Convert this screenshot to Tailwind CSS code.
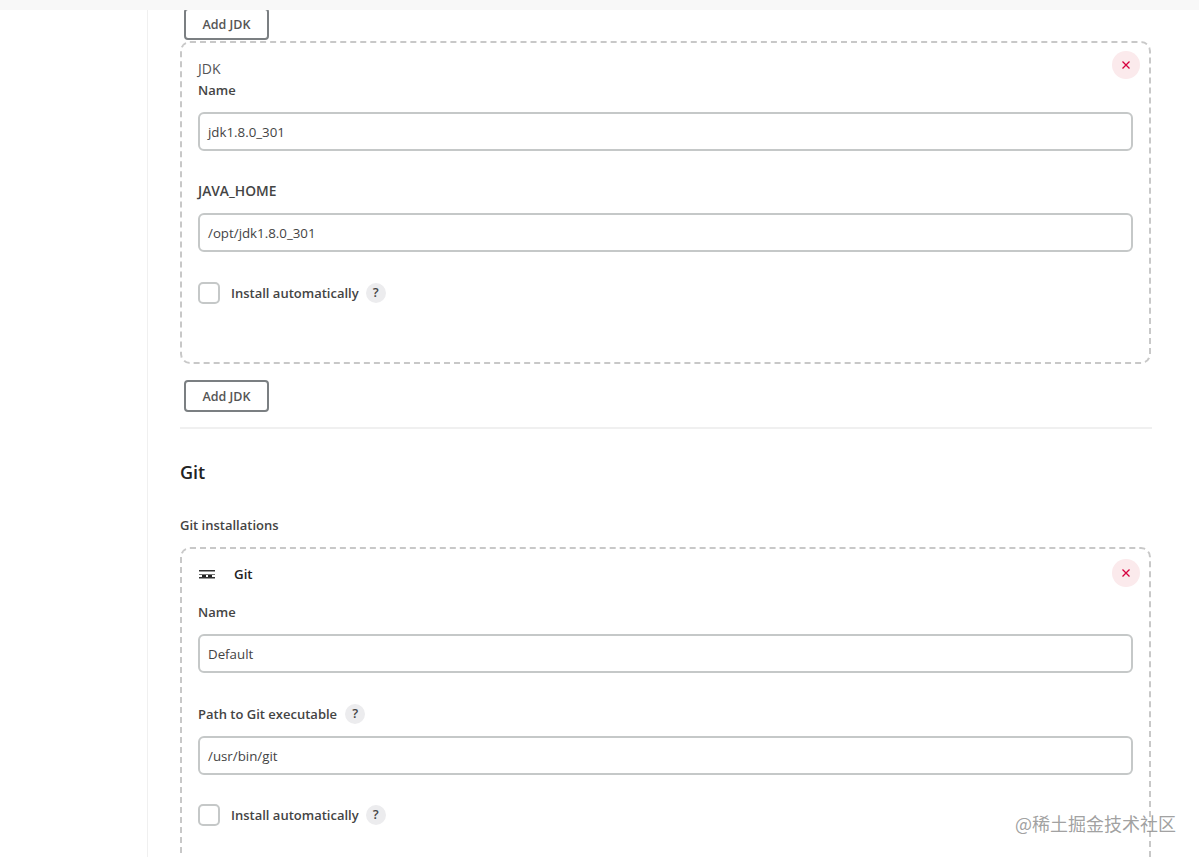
<!DOCTYPE html>
<html lang="en">
<head>
  <meta charset="UTF-8" />
  <title>Global Tool Configuration</title>
  <script src="https://cdn.jsdelivr.net/npm/@tailwindcss/browser@4"></script>
</head>
<body class="bg-white h-[857px] overflow-hidden font-['Open_Sans','Noto_Sans',sans-serif] text-[13.3px] text-[#333]">
  <div class="h-[10px] bg-[#f8f8f8]"></div>

  <div class="flex h-[847px] overflow-hidden relative">
    <div class="w-[148px] shrink-0 border-r border-[#f0f0f0]"></div>

    <div class="ml-[32px] w-[972px] shrink-0">
      <!-- first jdk -->
      <div class="h-[31px] overflow-hidden">
        <button class="-mt-[2px] ml-[4px] w-[85px] h-[32px] pt-[2px] border-2 border-[#7b7f82] rounded-[4px] font-semibold text-[12.5px] text-[#555] block">Add JDK</button>
      </div>

      <div class="mr-[1px] h-[323px] border-2 border-dashed border-[#c8c8c8] rounded-[10px] px-[16px] pt-[16px] relative">
        <button class="absolute right-[9px] top-[8px] w-[28px] h-[28px] rounded-full bg-[#fbeaec] flex items-center justify-center">
          <svg width="10" height="10" viewBox="0 0 10 10" fill="none" stroke="#d6003e" stroke-width="1.3"><path d="M1.5 1.5l7 7M8.5 1.5l-7 7"/></svg>
        </button>
        <div class="leading-[20px] text-[14px] text-[#555]">JDK</div>
        <div class="leading-[22px] text-[13px] font-semibold text-[#444]">Name</div>
        <div class="mt-[11px] h-[39px] pt-[2px] border-2 border-[#c5c8c8] rounded-[6px] px-[8px] flex items-center text-[#444]">jdk1.8.0_301</div>
        <div class="mt-[29px] leading-[22px] text-[13.8px] font-semibold text-[#444]">JAVA_HOME</div>
        <div class="mt-[11px] h-[39px] pt-[2px] border-2 border-[#c5c8c8] rounded-[6px] px-[8px] flex items-center text-[#444]">/opt/jdk1.8.0_301</div>
        <div class="mt-[30px] flex items-center h-[22px]">
          <span class="w-[22px] h-[22px] border-2 border-[#c5c8c8] rounded-[5px]"></span>
          <span class="ml-[11px] pt-[2px] text-[13px] font-semibold text-[#444]">Install automatically</span>
          <span class="ml-[7px] w-[20px] h-[20px] rounded-full bg-[#ececee] flex items-center justify-center text-[13px] font-semibold text-[#444]">?</span>
        </div>
      </div>

      <button class="mt-[16px] ml-[4px] w-[85px] h-[32px] pt-[2px] border-2 border-[#7b7f82] rounded-[4px] font-semibold text-[12.5px] text-[#555] block">Add JDK</button>
      <div class="mt-[15px] h-[2px] bg-[#f0f0f0]"></div>

      <h2 class="mt-[30px] leading-[26px] text-[18px] font-semibold text-[#222]">Git</h2>
      <div class="mt-[30px] leading-[20px] text-[13px] font-semibold text-[#444]">Git installations</div>

      <!-- git installation -->
      <div class="mr-[1px] mt-[12px] h-[400px] border-2 border-dashed border-[#c8c8c8] rounded-[10px] px-[16px] pt-[15px] relative">
        <button class="absolute right-[9px] top-[10px] w-[28px] h-[28px] rounded-full bg-[#fbeaec] flex items-center justify-center">
          <svg width="10" height="10" viewBox="0 0 10 10" fill="none" stroke="#d6003e" stroke-width="1.3"><path d="M1.5 1.5l7 7M8.5 1.5l-7 7"/></svg>
        </button>
        <div class="flex items-center h-[20px]">
          <svg width="16" height="9" viewBox="0 0 16 9" class="ml-[1px]">
            <path d="M0 0h16v1.500H0z" fill="#333"/>
            <path d="M0 4h16v1H0z" fill="#777"/>
            <path d="M3 5h4v2H3zM9 5h4v2H9z" fill="#222"/>
            <path d="M0 7h16v1.500H0z" fill="#333"/>
          </svg>
          <span class="ml-[19px] pt-[2px] font-semibold text-[#222]">Git</span>
        </div>
        <div class="mt-[17px] leading-[22px] text-[13px] font-semibold text-[#444]">Name</div>
        <div class="mt-[11px] h-[39px] pt-[2px] border-2 border-[#c5c8c8] rounded-[6px] px-[8px] flex items-center text-[#444]">Default</div>
        <div class="mt-[30px] flex items-center h-[22px]">
          <span class="pt-[2px] text-[13px] font-semibold text-[#444]">Path to Git executable</span>
          <span class="ml-[8px] w-[20px] h-[20px] rounded-full bg-[#ececee] flex items-center justify-center text-[13px] font-semibold text-[#444]">?</span>
        </div>
        <div class="mt-[11px] h-[39px] pt-[2px] border-2 border-[#c5c8c8] rounded-[6px] px-[8px] flex items-center text-[#444]">/usr/bin/git</div>
        <div class="mt-[29px] flex items-center h-[22px]">
          <span class="w-[22px] h-[22px] border-2 border-[#c5c8c8] rounded-[5px]"></span>
          <span class="ml-[11px] pt-[2px] text-[13px] font-semibold text-[#444]">Install automatically</span>
          <span class="ml-[7px] w-[20px] h-[20px] rounded-full bg-[#ececee] flex items-center justify-center text-[13px] font-semibold text-[#444]">?</span>
        </div>
      </div>
    </div>

    <!-- watermark sits over the page -->
    <div class="absolute left-[1015px] top-[800px] text-[18px] leading-[26px] text-[#888]/80 font-['Noto_Sans_CJK_SC',sans-serif]">@稀土掘金技术社区</div>
  </div>
</body>
</html>
